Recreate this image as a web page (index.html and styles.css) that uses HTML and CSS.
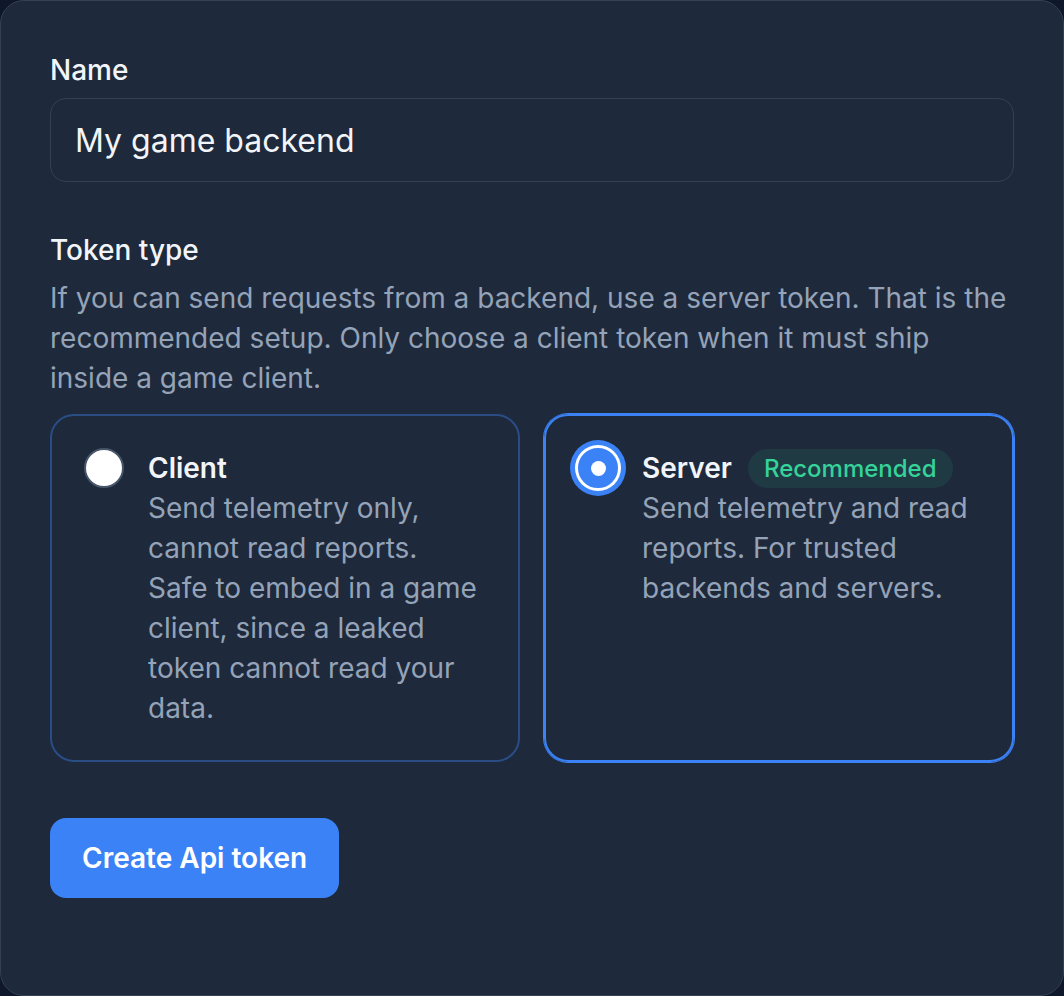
FILE: index.html
```html
<!DOCTYPE html>
<html lang="en">
<head>
    <meta charset="UTF-8">
    <meta name="viewport" content="width=device-width, initial-scale=1.0">
    <title>New API token</title>
    <link rel="stylesheet" href="styles.css">
</head>
<body>
    <form class="panel" onsubmit="return false">
        <div class="field">
            <label class="label" for="tokenName">Name</label>
            <input class="input" id="tokenName" type="text" value="My game backend">
        </div>

        <div class="field token-type">
            <div class="label">Token type</div>
            <p class="hint">
                If you can send requests from a backend, use a server token. That is the
                recommended setup. Only choose a client token when it must ship inside a game client.
            </p>
            <div class="options">
                <label class="option">
                    <span class="radio"></span>
                    <span class="option-body">
                        <span class="option-title">Client</span>
                        <span class="option-text">Send telemetry only, cannot read reports. Safe to embed in a game client, since a leaked token cannot read your data.</span>
                    </span>
                </label>
                <label class="option selected">
                    <span class="radio checked"></span>
                    <span class="option-body">
                        <span class="option-title">Server <span class="badge">Recommended</span></span>
                        <span class="option-text">Send telemetry and read reports. For trusted backends and servers.</span>
                    </span>
                </label>
            </div>
        </div>

        <button class="btn" type="submit">Create Api token</button>
    </form>
</body>
</html>
```

FILE: styles.css
```css
body {
    margin: 0;
    background-color: #0f172a;
    font-family: Inter, 'Noto Sans', sans-serif;
}
.panel {
    box-sizing: border-box;
    height: 100vh;
    padding: 49px;
    background-color: #1e293b;
    border: 1px solid #334155;
    border-radius: 24px;
}
.field {
    display: flex;
    flex-direction: column;
}
.label {
    font-size: 28px;
    line-height: 40px;
    font-weight: 500;
    color: #f1f5f9;
}
.input {
    box-sizing: border-box;
    margin-top: 8px;
    height: 84px;
    padding: 0 24px;
    background-color: #1e293b;
    border: 1px solid #334155;
    border-radius: 16px;
    font-family: inherit;
    font-size: 32px;
    color: #f1f5f9;
    outline: none;
}
.token-type {
    margin-top: 48px;
}
.hint {
    margin: 8px 0 0;
    font-size: 28px;
    line-height: 40px;
    color: #94a3b8;
}
.options {
    display: grid;
    grid-template-columns: 1fr 1fr;
    gap: 24px;
    margin-top: 16px;
}
.option {
    display: flex;
    gap: 24px;
    padding: 32px 40px 32px 32px;
    border: 2px solid #2a4d86;
    border-radius: 24px;
    cursor: pointer;
}
.option.selected {
    border-color: #3b82f6;
    box-shadow: 0 0 0 1px #3b82f6;
}
.radio {
    flex: none;
    box-sizing: border-box;
    width: 40px;
    height: 40px;
    background-color: #fff;
    border: 2px solid #475569;
    border-radius: 50%;
}
.radio.checked {
    position: relative;
    background-color: #3b82f6;
    border-color: #3b82f6;
    box-shadow: 0 0 0 3px #fff, 0 0 0 8px #3b82f6;
}
.radio.checked::after {
    content: '';
    position: absolute;
    top: 50%;
    left: 50%;
    width: 15px;
    height: 15px;
    margin: -7.5px 0 0 -7.5px;
    background-color: #fff;
    border-radius: 50%;
}
.option-body {
    display: flex;
    flex-direction: column;
}
.option-title {
    display: flex;
    align-items: center;
    gap: 16px;
    font-size: 28px;
    line-height: 40px;
    font-weight: 600;
    color: #f1f5f9;
}
.option-text {
    font-size: 28px;
    line-height: 40px;
    color: #94a3b8;
}
.badge {
    padding: 0 16px;
    font-size: 24px;
    line-height: 39px;
    font-weight: 500;
    color: #34d399;
    background-color: #203a44;
    border-radius: 999px;
}
.btn {
    display: block;
    margin-top: 56px;
    padding: 20px 32px;
    background-color: #3b82f6;
    border: none;
    border-radius: 16px;
    font-family: inherit;
    font-size: 28px;
    line-height: 40px;
    font-weight: 600;
    color: #fff;
    cursor: pointer;
}
```
